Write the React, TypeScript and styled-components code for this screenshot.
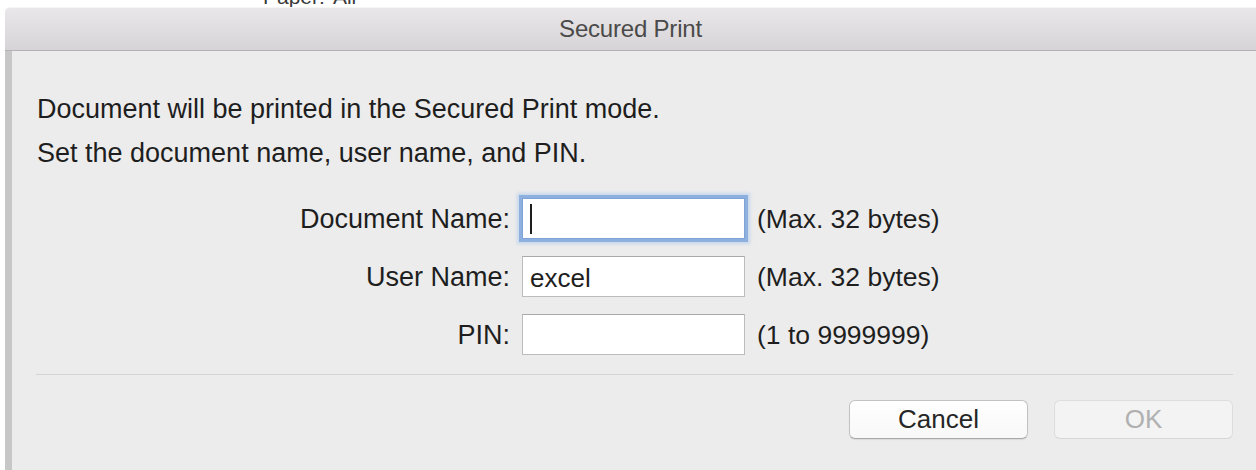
import React from "react";
import styled, { createGlobalStyle } from "styled-components";

const Global = createGlobalStyle`
  html, body {
    margin: 0;
    padding: 0;
    background: #ffffff;
  }
  body {
    font-family: "Liberation Sans", Arial, Helvetica, sans-serif;
    -webkit-font-smoothing: antialiased;
  }
`;

const Page = styled.div`
  width: 1256px;
  height: 470px;
  display: flex;
  flex-direction: column;
  background: #ffffff;
  overflow: hidden;
`;

/* the parent print dialog peeking out above the sheet */
const Backdrop = styled.div`
  height: 7px;
  flex: none;
  overflow: hidden;
  display: flex;
  gap: 8px;
  padding-left: 263px;
  font-size: 21px;
  line-height: 22px;
  color: #3a3a3a;
`;

const BackdropText = styled.span`
  margin-top: -14px;
`;

const Sheet = styled.div`
  flex: 1;
  margin-left: 5px;
  display: flex;
  flex-direction: column;
  min-height: 0;
`;

const TitleBar = styled.div`
  height: 42px;
  flex: none;
  display: flex;
  align-items: center;
  justify-content: center;
  border-top: 1px solid #f6f5f6;
  border-bottom: 1px solid #b4b2b4;
  border-top-left-radius: 5px;
  background: linear-gradient(#e9e7e9, #d6d4d6);
  color: #4a4a4a;
  font-size: 24px;
  letter-spacing: -0.2px;
`;

const Body = styled.div`
  flex: 1;
  display: flex;
  flex-direction: column;
  border-left: 7px solid #c7c7c7;
  background: #ececec;
  padding: 43px 23px 0 25px;
  color: #1e1e1e;
  font-size: 27px;
`;

const Message = styled.p`
  margin: 0 0 14px;
  line-height: 30px;
`;

const Form = styled.div`
  display: grid;
  grid-template-columns: 473px 223px auto;
  column-gap: 12px;
  row-gap: 17px;
  align-items: center;
  margin-top: 16px;
`;

const Label = styled.label`
  text-align: right;
  line-height: 30px;
`;

const Field = styled.div<{ $focused?: boolean }>`
  height: 41px;
  box-sizing: border-box;
  display: flex;
  align-items: center;
  padding: 4px 0 0 7px;
  background: #ffffff;
  border: 1px solid ${(p) => (p.$focused ? "#7fa3d6" : "#bcbcbc")};
  border-top-color: ${(p) => (p.$focused ? "#7fa3d6" : "#a9a9a9")};
  box-shadow: ${(p) =>
    p.$focused
      ? "0 0 0 3px #8eb0de, 0 0 3px 5px rgba(170, 198, 236, 0.55)"
      : "none"};
  font-size: 26px;
  color: #1e1e1e;
`;

const Caret = styled.span`
  width: 2px;
  height: 30px;
  margin-top: -4px;
  background: #1e1e1e;
`;

const Hint = styled.span`
  font-size: 26.5px;
  line-height: 30px;
`;

const Separator = styled.hr`
  margin: 19px 0 0 -1px;
  border: none;
  height: 1px;
  background: #d4d4d4;
`;

const Actions = styled.div`
  display: flex;
  justify-content: flex-end;
  gap: 26px;
  margin-top: 25px;
`;

const Button = styled.button<{ $disabled?: boolean }>`
  width: 179px;
  height: 39px;
  box-sizing: border-box;
  border-radius: 6px;
  font-family: inherit;
  font-size: 26px;
  padding: 0;
  border: 1px solid ${(p) => (p.$disabled ? "#dddddd" : "#c2c2c2")};
  border-bottom-color: ${(p) => (p.$disabled ? "#d6d6d6" : "#a8a8a8")};
  background: ${(p) =>
    p.$disabled ? "#f3f3f3" : "linear-gradient(#ffffff, #f8f8f8)"};
  color: ${(p) => (p.$disabled ? "#b0b0b0" : "#262626")};
  box-shadow: ${(p) => (p.$disabled ? "none" : "0 1px 1px rgba(0,0,0,0.08)")};
`;

export default function App() {
  return (
    <>
      <Global />
      <Page>
        <Backdrop>
          <BackdropText>Paper:</BackdropText>
          <BackdropText>All</BackdropText>
        </Backdrop>
        <Sheet>
          <TitleBar>Secured Print</TitleBar>
          <Body>
            <Message>Document will be printed in the Secured Print mode.</Message>
            <Message>Set the document name, user name, and PIN.</Message>
            <Form>
              <Label>Document Name:</Label>
              <Field $focused>
                <Caret />
              </Field>
              <Hint>(Max. 32 bytes)</Hint>

              <Label>User Name:</Label>
              <Field>excel</Field>
              <Hint>(Max. 32 bytes)</Hint>

              <Label>PIN:</Label>
              <Field />
              <Hint>(1 to 9999999)</Hint>
            </Form>
            <Separator />
            <Actions>
              <Button>Cancel</Button>
              <Button $disabled>OK</Button>
            </Actions>
          </Body>
        </Sheet>
      </Page>
    </>
  );
}
